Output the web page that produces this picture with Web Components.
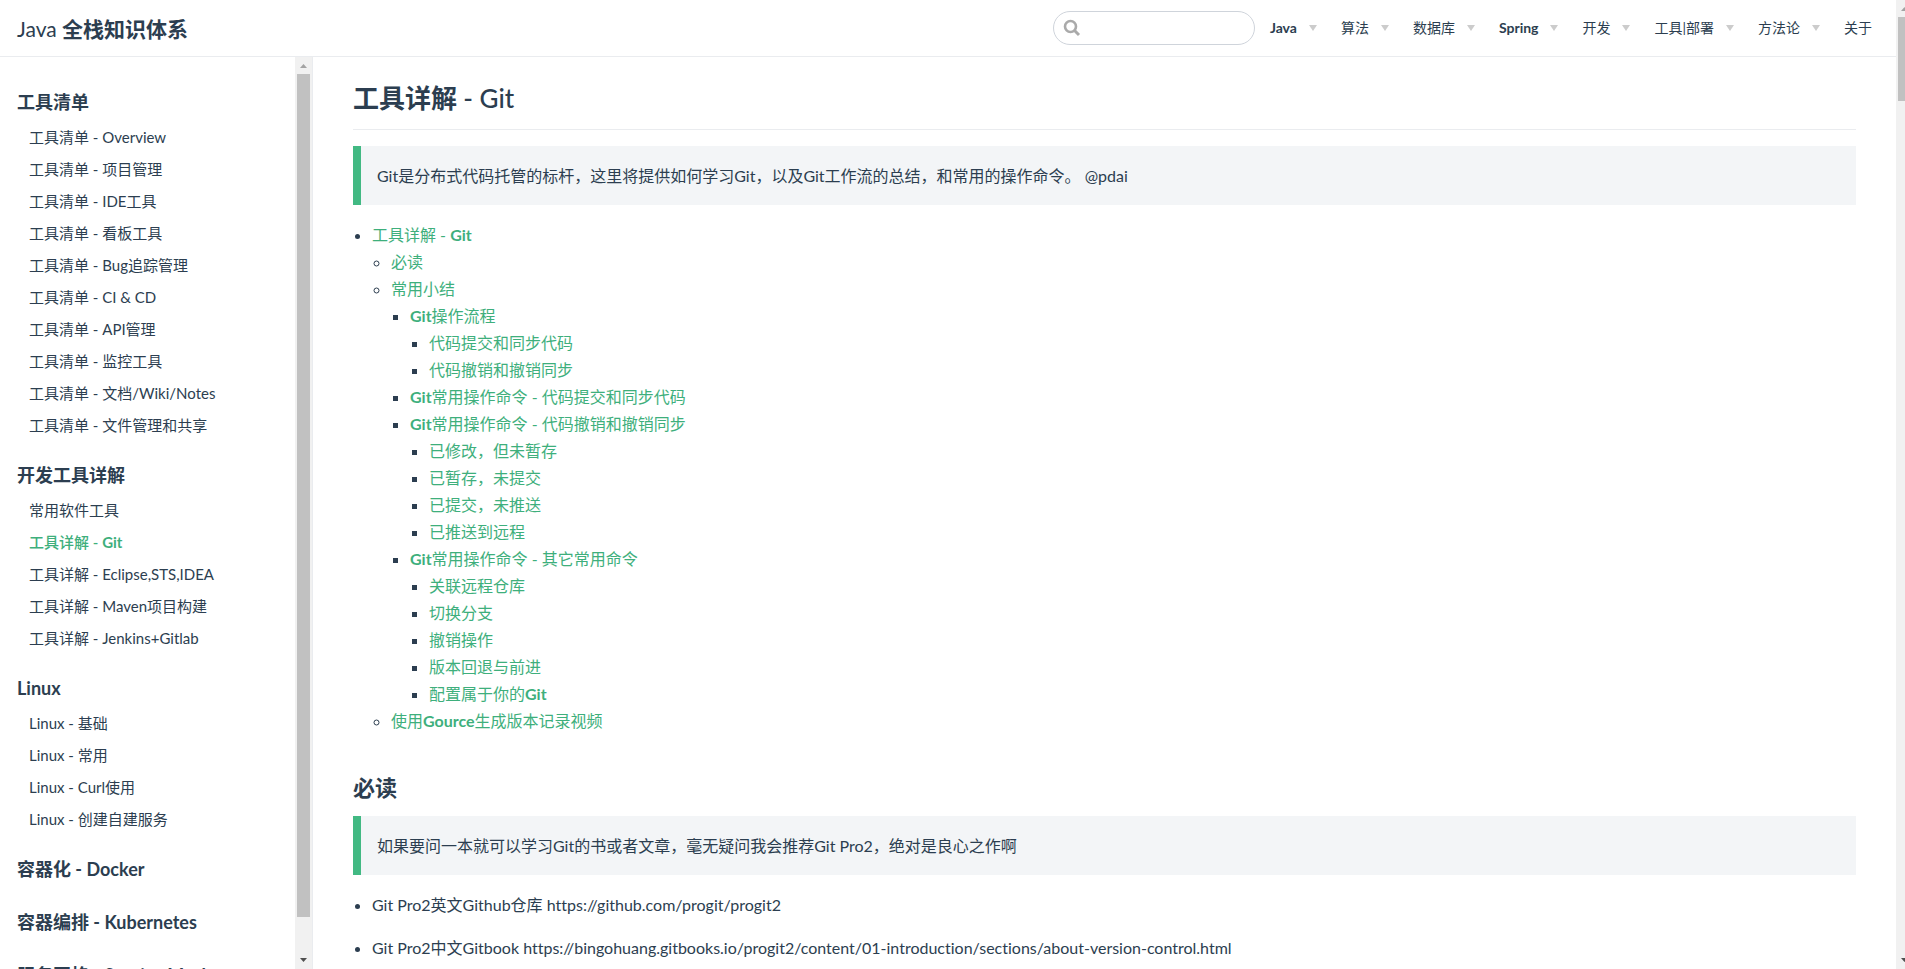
<!DOCTYPE html>
<html lang="zh-CN">
<head>
<meta charset="utf-8">
<title>工具详解 - Git | Java 全栈知识体系</title>
<style>
html, body { margin: 0; height: 100%; }
body { font: 400 16px/27px Lato, "Noto Sans CJK SC", sans-serif; font-variant-ligatures: none; color: #2c3e50; background: #fff; }
</style>
</head>
<body>
<docs-app>
  <site-navbar slot="navbar">
    <span slot="title">Java <b>全栈知识体系</b></span>
    <nav-item menu><b>Java</b></nav-item>
    <nav-item menu>算法</nav-item>
    <nav-item menu>数据库</nav-item>
    <nav-item menu><b>Spring</b></nav-item>
    <nav-item menu>开发</nav-item>
    <nav-item menu>工具|部署</nav-item>
    <nav-item menu>方法论</nav-item>
    <nav-item>关于</nav-item>
  </site-navbar>
  <site-sidebar slot="sidebar"></site-sidebar>
  <doc-title>工具详解 <span slot="latin">- Git</span></doc-title>
  <doc-quote>Git是分布式代码托管的标杆，这里将提供如何学习Git，以及Git工作流的总结，和常用的操作命令。 @pdai</doc-quote>
  <doc-toc></doc-toc>
  <doc-section heading="必读">
    <doc-quote>如果要问一本就可以学习Git的书或者文章，毫无疑问我会推荐Git Pro2，绝对是良心之作啊</doc-quote>
    <doc-notes></doc-notes>
  </doc-section>
</docs-app>

<script>
function define(name, render) {
  customElements.define(name, class extends HTMLElement {
    connectedCallback() {
      if (this.shadowRoot) return;
      const t = document.createElement('template');
      t.innerHTML = render(this);
      this.attachShadow({ mode: 'open' }).append(t.content);
    }
  });
}

/* Page frame: navbar on top, sidebar + article below, page scroll rail at the right */
define('docs-app', () => `
<style>
:host { display: flex; height: 100vh; overflow: hidden; }
.page { flex: 1; min-width: 0; display: flex; flex-direction: column; }
.body { flex: 1; min-height: 0; display: flex; }
main { flex: 1; min-width: 0; overflow: hidden; padding: 25px 40px 0; }
.edge { width: 9px; overflow: hidden; }
</style>
<div class="page">
  <slot name="navbar"></slot>
  <div class="body"><slot name="sidebar"></slot><main><slot></slot></main></div>
</div>
<div class="edge"><scroll-rail style="--thumb: 9%"></scroll-rail></div>`);

define('scroll-rail', () => `
<style>
:host { display: flex; flex-direction: column; width: 17px; height: 100%; background: #f1f1f1; }
svg { display: block; flex: none; width: 17px; height: 17px; }
.track { flex: 1; padding: 0 2px; }
.thumb { height: var(--thumb); background: #c1c1c1; }
</style>
<svg viewBox="0 0 17 17" aria-hidden="true"><path d="M5 11h7L8.500 7z" fill="#a3a3a3"/></svg>
<div class="track"><div class="thumb"></div></div>
<svg viewBox="0 0 17 17" aria-hidden="true"><path d="M5 6h7L8.500 10z" fill="#505050"/></svg>`);

define('site-navbar', () => `
<style>
:host { display: block; flex: none; }
header { display: flex; align-items: center; height: 56px; padding: 0 24px 0 17px; border-bottom: 1px solid #eaecef; }
.home { flex: 1; font-size: 21px; color: inherit; text-decoration: none; white-space: nowrap; }
nav { display: flex; gap: 24px; }
.search { position: relative; display: flex; margin-right: 15px; }
input { box-sizing: border-box; width: 202px; height: 34px; padding: 0 8px 0 32px; border: 1px solid #cfd4db; border-radius: 17px; background: #fff; font: inherit; color: #4e6e8e; outline: none; }
svg { position: absolute; left: 10px; top: 8px; width: 18px; height: 18px; }
</style>
<header>
  <a class="home" href="#home"><slot name="title"></slot></a>
  <label class="search">
    <input type="search" aria-label="搜索" autocomplete="off">
    <svg viewBox="0 0 18 18" fill="none" stroke="#aaa" aria-hidden="true"><circle cx="7.500" cy="7.500" r="5.500" stroke-width="2.600"/><path d="M11.300 11.300L16 16" stroke-width="3"/></svg>
  </label>
  <nav><slot></slot></nav>
</header>`);

define('nav-item', el => `
<style>
:host { display: block; white-space: nowrap; }
a, button { display: flex; align-items: center; gap: 12px; padding: 0; border: 0; background: none; font: inherit; font-size: 14px; line-height: 28px; color: inherit; text-decoration: none; cursor: pointer; }
i { border: 4px solid transparent; border-top: 6px solid #ccc; border-bottom: 0; }
</style>
${el.hasAttribute('menu')
  ? '<button type="button" aria-haspopup="true"><slot></slot><i></i></button>'
  : '<a href="#about"><slot></slot></a>'}`);

const groups = [
  ['工具清单', ['工具清单 - Overview', '工具清单 - 项目管理', '工具清单 - IDE工具', '工具清单 - 看板工具', '工具清单 - Bug追踪管理', '工具清单 - CI & CD', '工具清单 - API管理', '工具清单 - 监控工具', '工具清单 - 文档/Wiki/Notes', '工具清单 - 文件管理和共享']],
  ['开发工具详解', ['常用软件工具', '工具详解 - Git', '工具详解 - Eclipse,STS,IDEA', '工具详解 - Maven项目构建', '工具详解 - Jenkins+Gitlab']],
  ['Linux', ['Linux - 基础', 'Linux - 常用', 'Linux - Curl使用', 'Linux - 创建自建服务']],
  ['容器化 - Docker', []],
  ['容器编排 - Kubernetes', []],
  ['服务网格 - Service Mesh', []],
];
const escape = s => s.replace(/&/g, '&amp;');
/* Latin words inside highlighted links are set bold, the Chinese text stays regular */
const strongLatin = s => escape(s).replace(/[A-Za-z]+/g, '<b>$&</b>');

define('site-sidebar', () => `
<style>
:host { display: flex; flex: none; width: 312px; border-right: 1px solid #eaecef; }
nav { flex: 1; min-width: 0; overflow: hidden; display: flex; flex-direction: column; gap: 16px; padding: 27px 0 0 17px; }
section { flex: none; }
h3 { margin: 0; font-size: 18px; line-height: 37px; font-weight: 700; }
ul { list-style: none; margin: 0; padding: 0 0 0 12px; }
a { display: block; font-size: 15px; line-height: 32px; color: inherit; text-decoration: none; white-space: nowrap; }
a[aria-current] { color: #3eaf7c; font-weight: 500; }
</style>
<nav aria-label="目录">${groups.map(([name, items]) => `
  <section><h3>${name}</h3>${items.length ? `<ul>${items.map(t => t === '工具详解 - Git'
    ? `<li><a href="#page" aria-current="page">${strongLatin(t)}</a></li>`
    : `<li><a href="#page">${escape(t)}</a></li>`).join('')}</ul>` : ''}</section>`).join('')}
</nav>
<scroll-rail style="--thumb: 96%"></scroll-rail>`);

define('doc-title', () => `
<style>
:host { display: block; }
h1 { margin: 0 0 16px; padding-bottom: 15px; border-bottom: 1px solid #eaecef; font-size: 26px; line-height: 32px; font-weight: 700; }
.latin { font-weight: 500; }
</style>
<h1><slot></slot><span class="latin"><slot name="latin"></slot></span></h1>`);

define('doc-quote', () => `
<style>
:host { display: block; }
blockquote { margin: 0 0 16px; padding: 16px; border-left: 8px solid #42b983; background: #f3f5f7; }
</style>
<blockquote><slot></slot></blockquote>`);

define('doc-section', el => `
<style>
:host { display: block; }
h2 { margin: 40px 0 14px; font-size: 22px; line-height: 28px; font-weight: 700; }
</style>
<h2>${el.getAttribute('heading')}</h2><slot></slot>`);

const toc = [['工具详解 - Git', [
  ['必读'],
  ['常用小结', [
    ['Git操作流程', [['代码提交和同步代码'], ['代码撤销和撤销同步']]],
    ['Git常用操作命令 - 代码提交和同步代码'],
    ['Git常用操作命令 - 代码撤销和撤销同步', [['已修改，但未暂存'], ['已暂存，未提交'], ['已提交，未推送'], ['已推送到远程']]],
    ['Git常用操作命令 - 其它常用命令', [['关联远程仓库'], ['切换分支'], ['撤销操作'], ['版本回退与前进'], ['配置属于你的Git']]],
  ]],
  ['使用Gource生成版本记录视频'],
]]];
const tree = list => `<ul>${list.map(([t, kids]) => `<li><a href="#section">${strongLatin(t)}</a>${kids ? tree(kids) : ''}</li>`).join('')}</ul>`;

define('doc-toc', () => `
<style>
:host { display: block; }
ul { margin: 0; padding-left: 19px; }
a { color: #3eaf7c; text-decoration: none; }
</style>${tree(toc)}`);

define('doc-notes', () => `
<style>
:host { display: block; }
ul { display: flex; flex-direction: column; gap: 16px; margin: 0; padding-left: 19px; }
</style>
<ul>
  <li>Git Pro2英文Github仓库 https://github.com/progit/progit2</li>
  <li>Git Pro2中文Gitbook https://bingohuang.gitbooks.io/progit2/content/01-introduction/sections/about-version-control.html</li>
</ul>`);
</script>
</body>
</html>
